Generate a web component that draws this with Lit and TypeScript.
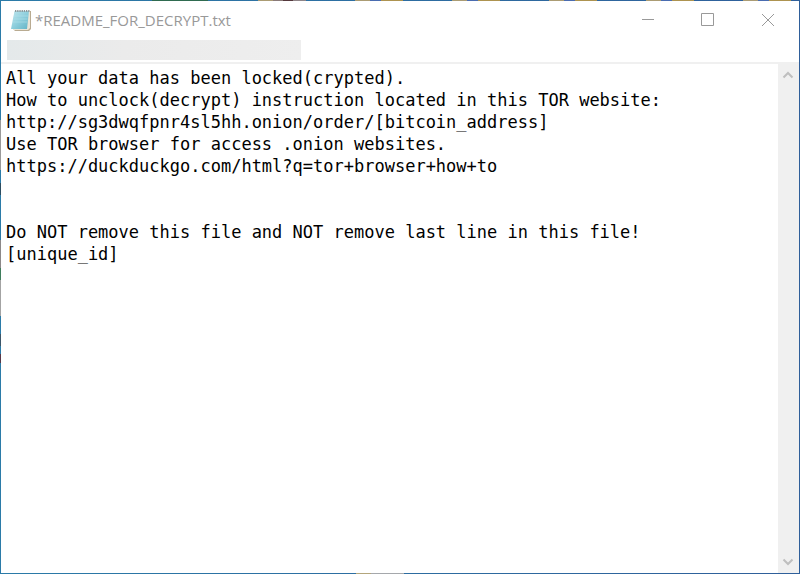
import { LitElement, html, css } from "lit";
import { customElement, state } from "lit/decorators.js";

const NOTE = `All your data has been locked(crypted).
How to unclock(decrypt) instruction located in this TOR website:
http://sg3dwqfpnr4sl5hh.onion/order/[bitcoin_address]
Use TOR browser for access .onion websites.
https://duckduckgo.com/html?q=tor+browser+how+to


Do NOT remove this file and NOT remove last line in this file!
[unique_id]`;

@customElement("title-bar")
export class TitleBar extends LitElement {
  static styles = css`
    :host {
      display: flex;
      align-items: center;
      height: 37px;
      padding: 0 1px 0 9px;
      background: #fff;
      color: #999;
    }
    .icon {
      flex: none;
      width: 22px;
      height: 24px;
    }
    .title {
      flex: 1;
      margin: 0 0 0 3px;
      font: 400 15px/22px "Open Sans", "Noto Sans", sans-serif;
      white-space: nowrap;
      overflow: hidden;
    }
    .controls {
      display: flex;
    }
    .control {
      display: grid;
      place-items: center;
      width: 60px;
      height: 36px;
      padding: 0;
      border: 0;
      background: none;
    }
    .control svg {
      width: 14px;
      height: 14px;
      fill: none;
      stroke: #999;
    }
  `;

  render() {
    return html`
      <svg class="icon" viewBox="0 0 22 24" aria-hidden="true">
        <defs>
          <linearGradient id="page" x1="0" y1="0" x2="1" y2="1">
            <stop offset="0" stop-color="#bfe6ee" />
            <stop offset=".5" stop-color="#8fcfdd" />
            <stop offset="1" stop-color="#62b3c6" />
          </linearGradient>
        </defs>
        <path d="M5 3H21V21L19 23H5L3 21Z" fill="#b9ab91" />
        <path d="M5 3H20V20L18 22H3Z" fill="#e9e4d6" />
        <path d="M4.500 3H19L17 21H1Z" fill="url(#page)" />
        <path d="M4 8H18M3.500 11H17.500M3 14H17" stroke="#b4e0e9" stroke-width=".6" />
        <path d="M5 3H19.500" stroke="#8d9799" stroke-width="2" stroke-dasharray="1.300 .9" />
      </svg>
      <h1 class="title">*README_FOR_DECRYPT.txt</h1>
      <div class="controls">
        <button class="control" aria-label="Minimize">
          <svg viewBox="0 0 14 14"><path d="M1 6.500H13" /></svg>
        </button>
        <button class="control" aria-label="Maximize">
          <svg viewBox="0 0 14 14"><path d="M.5 .5H12.500V12.500H.5Z" /></svg>
        </button>
        <button class="control" aria-label="Close">
          <svg viewBox="0 0 14 14"><path d="M1 1L13 13M13 1L1 13" /></svg>
        </button>
      </div>
    `;
  }
}

@customElement("scroll-rail")
export class ScrollRail extends LitElement {
  static styles = css`
    :host {
      display: flex;
      flex-direction: column;
      justify-content: space-between;
      width: 21px;
      background: #f0f0f0;
    }
    .arrow {
      display: grid;
      place-items: center;
      width: 20px;
      height: 22px;
      padding: 0;
      border: 0;
      background: none;
    }
    .arrow svg {
      width: 12px;
      height: 8px;
      fill: none;
      stroke: #bfbfbf;
      stroke-width: 2;
    }
  `;

  render() {
    return html`
      <button class="arrow" aria-label="Scroll up">
        <svg viewBox="0 0 12 8"><path d="M1.500 6.500L6 2L10.500 6.500" /></svg>
      </button>
      <button class="arrow" aria-label="Scroll down">
        <svg viewBox="0 0 12 8"><path d="M1.500 1.500L6 6L10.500 1.500" /></svg>
      </button>
    `;
  }
}

@customElement("app-root")
export class AppRoot extends LitElement {
  /* The one-pixel frame shows slivers of the desktop behind the window. */
  static styles = css`
    :host {
      display: flex;
      flex-direction: column;
      box-sizing: border-box;
      min-height: 100vh;
      padding: 1px;
      background:
        linear-gradient(90deg, transparent 152px, #2f6b50 152px 208px, transparent 208px 258px,
          #ab9c74 258px 273px, #8a7a78 273px 283px, #54383c 283px 293px, #8f8588 293px 306px,
          transparent 306px) 0 0 / 340px 1px no-repeat,
        repeating-linear-gradient(90deg, #ab9c74 0 15px, #4a6cb0 15px 26px, #ad9350 26px 48px,
          transparent 48px 97px) 355px 0 / 100% 1px no-repeat,
        linear-gradient(90deg, #b3a67c 15px, #a5a8ac 15px) 356px 100% / 48px 1px no-repeat,
        linear-gradient(180deg, transparent 120px, #9a9a9a 120px 170px, transparent 170px 183px,
          #2c4c60 183px 195px, transparent 195px 240px, #8c8888 240px 268px, #3f7d5c 268px 280px,
          #a3a3a3 280px 316px, transparent 316px 334px, #3c5568 334px 346px, transparent 346px 354px,
          #563848 354px 363px, transparent 363px) 0 0 / 1px 100% no-repeat,
        linear-gradient(90deg, #2b7ba8, #2f5f9a);
    }
    .menu {
      height: 24px;
      padding: 2px 6px 0;
      box-sizing: border-box;
      background: #fff;
    }
    .blank {
      width: 294px;
      max-width: 100%;
      height: 20px;
      background: linear-gradient(100deg, #e4e9ea, #ebebeb 40%, #eee);
    }
    .editor {
      flex: 1;
      display: flex;
      border-top: 2px solid #f0f0f0;
    }
    .text {
      flex: 1;
      min-width: 0;
      box-sizing: border-box;
      margin: 0;
      padding: 3px 5px;
      border: 0;
      outline: 0;
      resize: none;
      overflow: hidden;
      background: #fff;
      color: #000;
      font: 17px/22px "DejaVu Sans Mono", monospace;
    }
  `;

  @state() private note = NOTE;

  render() {
    return html`
      <title-bar></title-bar>
      <div class="menu"><div class="blank"></div></div>
      <div class="editor">
        <textarea
          class="text"
          aria-label="Document text"
          spellcheck="false"
          .value=${this.note}
          @input=${(e: Event) => (this.note = (e.target as HTMLTextAreaElement).value)}
        ></textarea>
        <scroll-rail></scroll-rail>
      </div>
    `;
  }
}
